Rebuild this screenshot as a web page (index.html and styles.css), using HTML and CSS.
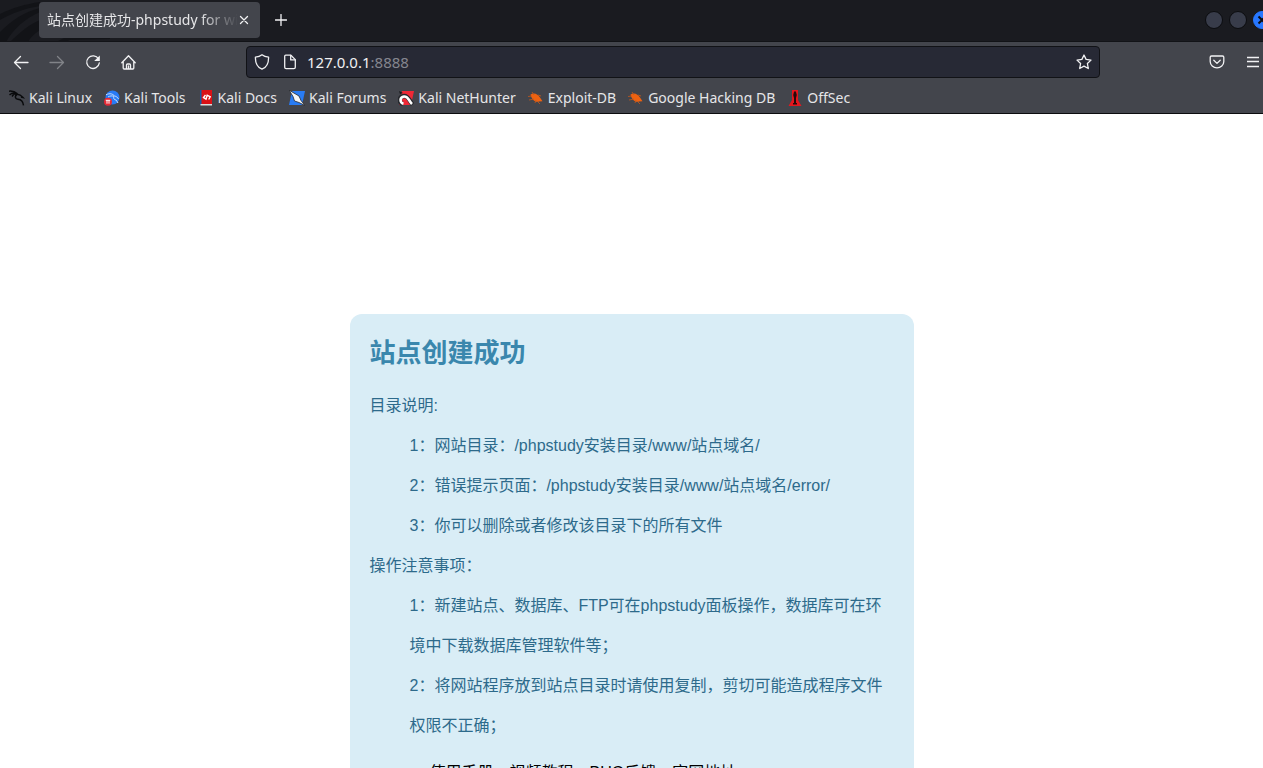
FILE: index.html
```html
<!DOCTYPE html>
<html lang="zh-Hans">
<head>
<meta charset="utf-8">
<title>站点创建成功-phpstudy for windows</title>
<link rel="stylesheet" href="styles.css">
</head>
<body>
<header class="browser">
  <div class="tabstrip">
    <svg class="dragon" width="110" height="42" viewBox="0 0 110 42" aria-hidden="true">
      <path d="M0 14C12 8 26 4 40 2L40 6C26 8 12 13 0 20ZM0 32C12 20 24 12 40 8L40 12C26 18 14 28 6 42H0ZM10 42C20 32 30 24 40 20L40 30C34 34 30 38 28 42ZM56 42L64 38H110V39L70 40L66 42Z"/>
    </svg>
    <div class="tab">
      <span class="tab-title">站点创建成功-phpstudy for windows</span>
      <button class="icon-btn tab-close" aria-label="Close tab">
        <svg width="10" height="10" viewBox="0 0 10 10"><path d="M1.500 1.500l7 7M8.500 1.500l-7 7"/></svg>
      </button>
    </div>
    <button class="icon-btn new-tab" aria-label="New tab">
      <svg width="12" height="12" viewBox="0 0 12 12"><path d="M6 .5v11M.5 6h11"/></svg>
    </button>
    <div class="window-buttons">
      <button class="win" aria-label="Minimize"></button>
      <button class="win" aria-label="Maximize"></button>
      <button class="win win-close" aria-label="Close">
        <svg width="16" height="16" viewBox="0 0 16 16"><path d="M4.500 4.500l7 7M11.500 4.500l-7 7"/></svg>
      </button>
    </div>
  </div>
  <div class="navbar">
    <div class="nav-buttons">
      <button class="icon-btn" aria-label="Back"><svg width="16" height="16" viewBox="0 0 16 16"><path d="M15 8.500H1.500M7.500 2.500l-6 6 6 6"/></svg></button>
      <button class="icon-btn" aria-label="Forward" disabled><svg width="16" height="16" viewBox="0 0 16 16"><path d="M1 8.500h13.500M8.500 2.500l6 6-6 6"/></svg></button>
      <button class="icon-btn" aria-label="Reload"><svg width="16" height="16" viewBox="0 0 16 16"><path d="M13.500 5A6.300 6.300 0 1 0 14.300 9"/><path class="solid" d="M14.800 1.500v5.600H9.200Z"/></svg></button>
      <button class="icon-btn" aria-label="Home"><svg width="16" height="16" viewBox="0 0 16 16"><path d="M.8 8.700L7.500 1.700l6.700 7M2.200 7.500v6.500q0 1 1 1h8.600q1 0 1-1V7.500M5.500 15v-4q0-1 1-1h2q1 0 1 1v4M7.500 12v3"/></svg></button>
    </div>
    <form class="urlbar">
      <svg width="16" height="16" viewBox="0 0 16 16"><path d="M8 .8c1.800 1.500 4 2.200 6.600 2.400.1 5.200-1.400 9.800-6.600 12C2.800 13 1.300 8.400 1.400 3.200 4 3 6.200 2.300 8 .8Z"/></svg>
      <svg width="16" height="16" viewBox="0 0 16 16"><path d="M3.700 1.200h5.200l4.400 4.400v7.700q0 1.400-1.400 1.400H4.100q-1.400 0-1.400-1.400V2.200q0-1 1-1Z"/><path d="M8.700 1.500v4.400h4.400"/></svg>
      <div class="url" contenteditable="true" role="textbox" aria-label="Address">127.0.0.1<span class="port">:8888</span></div>
      <button type="button" class="icon-btn star" aria-label="Bookmark"><svg width="16" height="16" viewBox="0 0 16 16"><path d="M8 1l2.100 4.400 4.900.7-3.600 3.400.9 5-4.300-2.400-4.300 2.400.9-5L1 6.100l4.900-.7Z"/></svg></button>
    </form>
    <div class="nav-end">
      <button class="icon-btn" aria-label="Save to Pocket"><svg width="16" height="16" viewBox="0 0 16 16"><path d="M2.500 2h11q1.300 0 1.300 1.300V7.500a6.800 6.300 0 0 1-13.600 0V3.300Q1.200 2 2.500 2ZM4.800 6.300L8 9.400l3.200-3.100"/></svg></button>
      <button class="icon-btn" aria-label="Menu"><svg width="12" height="16" viewBox="0 0 12 16"><path d="M0 3.500h12M0 7.500h12M0 12.500h12"/></svg></button>
    </div>
  </div>
  <nav class="bookmarks">
    <a href="#"><svg width="16" height="16" viewBox="0 0 16 16"><g fill="none" stroke="#090a0c" stroke-width="1.500"><path d="M0 1.200c3-.4 6 .5 8.500 2.600M.5 4.800c2-1.500 4.500-1.800 7-.9 2.500.3 4.500 1 6.500 3.500l-2-.5M8 4.500c-2.500 1.500-2 4.500 1 4.800 3 .3 5 1.500 5.500 6M2.500 3.300L8 4.200M3 6.500L5 4"/></g></svg>Kali Linux</a>
    <a href="#"><svg width="16" height="16" viewBox="0 0 16 16"><circle cx="8.500" cy="7.500" r="7" fill="#287bf6"/><path d="M2 4.800c4-2 7-.8 8.500 1.200 2 .4 3 1.200 4 3M4 7c2-1.300 4-1.300 6-.7-1 2 0 3.500 2.200 3.800L14 13" fill="none" stroke="#c7ddfb"/><circle cx="4" cy="11.800" r="4" fill="#e52835"/><path d="M1.800 10.300h4.400M3 10.500v3.200M5 10.500v3.200" stroke="#fff"/></svg>Kali Tools</a>
    <a href="#"><svg width="16" height="16" viewBox="0 0 16 16"><path fill="#185a9d" d="M2 0h2v15H2Z"/><path fill="#da1117" d="M3.500 0H14v14H3.500Z"/><path fill="#ddd" d="M2.500 14H14v1.500H2.500Z"/><path d="M7.500 5L5.500 7.500 8 9.200l1.200-4 3 1.600-1.500 2.700" fill="none" stroke="#fff" stroke-width="1.400"/></svg>Kali Docs</a>
    <a href="#"><svg width="16" height="16" viewBox="0 0 16 16"><path fill="#297cf4" d="M3 1h13l-3 14H0Z"/><path fill="#f6f6f6" stroke="#25272c" stroke-width=".8" d="M0 0l4 2.500L10 6l2 4.500 4 5-6-3L5.500 11 4 6.500Z"/></svg>Kali Forums</a>
    <a href="#"><svg width="16" height="16" viewBox="0 0 16 16"><path fill="#ef2836" d="M4 1h12l-3 14H1Z"/><path d="M5 14C.5 12.500.8 6.500 6 6c4.500-.3 5 4.500 8.500 8.500" fill="none" stroke="#25272c" stroke-width="4.400"/><path d="M5.500 13.800C1.500 12.500 1.500 7 6 6.500c4.500-.3 4.500 4 8 7.500" fill="none" stroke="#fff" stroke-width="2.600"/><path fill="#17181b" d="M1 1l4 2-3 1Z"/></svg>Kali NetHunter</a>
    <a href="#"><svg width="16" height="16" viewBox="0 0 16 16"><path fill="#ef6211" d="M2.500 4.500C6 2 10 4 12 7.500l2.500 3.700-3.500.3C7 13 3.500 9 2.500 4.500Z"/><path d="M0 6.500l4-.5M1 10l5-1M4 2l2 3M7 13l1-3M10 12l2 2M10 5l3 1" stroke="#c75819" stroke-width=".8"/></svg>Exploit-DB</a>
    <a href="#"><svg width="16" height="16" viewBox="0 0 16 16"><path fill="#ef6211" d="M2.500 4.500C6 2 10 4 12 7.500l2.500 3.700-3.500.3C7 13 3.500 9 2.500 4.500Z"/><path d="M0 6.500l4-.5M1 10l5-1M4 2l2 3M7 13l1-3M10 12l2 2M10 5l3 1" stroke="#c75819" stroke-width=".8"/></svg>Google Hacking DB</a>
    <a href="#"><svg width="16" height="16" viewBox="0 0 16 16"><path fill="#e5161d" d="M5 0h6v10l3.500 6h-13L5 10Z"/><path fill="#26090b" d="M7 2l1-1 1 1 .8 3-.8 3v5h1v1.500H6V13h1V8l-.8-3Z"/></svg>OffSec</a>
  </nav>
</header>
<main class="page">
  <section class="card">
    <h1>站点创建成功</h1>
    <p>目录说明:</p>
    <ul>
      <li>1：网站目录：/phpstudy安装目录/www/站点域名/</li>
      <li>2：错误提示页面：/phpstudy安装目录/www/站点域名/error/</li>
      <li>3：你可以删除或者修改该目录下的所有文件</li>
    </ul>
    <p>操作注意事项：</p>
    <ul>
      <li>1：新建站点、数据库、FTP可在phpstudy面板操作，数据库可在环境中下载数据库管理软件等；</li>
      <li>2：将网站程序放到站点目录时请使用复制，剪切可能造成程序文件权限不正确；</li>
    </ul>
    <div class="links">
      <a href="#">使用手册</a>
      <a href="#">视频教程</a>
      <a href="#">BUG反馈</a>
      <a href="#">官网地址</a>
    </div>
  </section>
</main>
</body>
</html>
```
FILE: styles.css
```css
* { box-sizing: border-box; }

body {
  margin: 0;
  height: 100vh;
  display: flex;
  flex-direction: column;
  overflow: hidden;
  background: #fff;
  font-family: "Liberation Sans", "Noto Sans CJK SC", sans-serif;
}

.browser {
  flex: none;
  background: #43454c;
  color: #e6e6e8;
  border-bottom: 1px solid #0c0c0e;
  font: 14px/20px "Noto Sans", "Noto Sans CJK SC", sans-serif;
}

.browser svg { flex: none; display: block; }

.icon-btn {
  display: flex;
  align-items: center;
  justify-content: center;
  padding: 0;
  border: 0;
  background: none;
  color: #f2f2f4;
}

.icon-btn svg,
.urlbar > svg {
  fill: none;
  stroke: currentColor;
  stroke-width: 1.3;
  stroke-linejoin: round;
  stroke-linecap: round;
}

.icon-btn .solid { fill: currentColor; stroke: none; }
.icon-btn:disabled { color: #818388; }

.tabstrip {
  position: relative;
  display: flex;
  align-items: center;
  height: 42px;
  padding: 0 0 2px 39px;
  background: #1a1b20;
  border-bottom: 1px solid #121317;
}

.dragon { position: absolute; left: 0; top: 0; fill: #121317; }

.tab {
  position: relative;
  display: flex;
  align-items: center;
  width: 221px;
  height: 36px;
  padding: 0 10px 0 8px;
  border-radius: 4px;
  background: #43454c;
}

.tab-title {
  flex: 1;
  overflow: hidden;
  white-space: nowrap;
  -webkit-mask-image: linear-gradient(to right, #000 80%, transparent);
  mask-image: linear-gradient(to right, #000 80%, transparent);
}

.tab-close { width: 12px; height: 20px; }
.new-tab { width: 42px; height: 36px; }

.window-buttons { display: flex; gap: 6px; margin-left: auto; margin-right: -8px; }

.win {
  width: 18px;
  height: 18px;
  padding: 0;
  border: 1px solid #0b0c0f;
  border-radius: 50%;
  background: #383c4a;
}

.win-close { border-color: #2777ff; background: #2777ff; }
.win-close svg { stroke: #0b0c12; stroke-width: 2; fill: none; }

.navbar {
  display: flex;
  align-items: center;
  height: 40px;
}

.nav-buttons { flex: 1 1 246px; display: flex; gap: 20px; padding-left: 13px; }
.nav-end { flex: 0 0 163px; display: flex; justify-content: flex-end; gap: 22px; padding-right: 4px; }

.urlbar {
  flex: 0 1 854px;
  display: flex;
  align-items: center;
  gap: 12px;
  height: 32px;
  padding: 0 7px;
  border: 1px solid #111216;
  border-radius: 4px;
  background: #272935;
  color: #f0f0f2;
}

.url { flex: 1; margin-left: -3px; outline: 0; font-size: 15px; }
.port { color: #85868f; }

.bookmarks {
  display: flex;
  gap: 12px;
  height: 31px;
  align-items: center;
  padding-left: 9px;
}

.bookmarks a {
  display: flex;
  align-items: center;
  gap: 4px;
  color: inherit;
  text-decoration: none;
  white-space: nowrap;
}

.page { flex: 1; min-height: 0; overflow: hidden; padding-top: 200px; }

.card {
  width: 564px;
  margin: 0 auto;
  padding: 20px;
  border-radius: 12px;
  background: #d9edf6;
  color: #2d6a8b;
  font-size: 16px;
  line-height: 40px;
}

.card h1 {
  margin: 0 0 14px;
  color: #3a87ad;
  font-size: 26px;
  line-height: 38px;
}

.card p { margin: 0; }
.card ul { margin: 0; padding: 0 0 0 40px; list-style: none; }

.links { display: flex; gap: 16px; padding: 7px 0 0 60px; }
.links a { color: #000; text-decoration: none; }
```
